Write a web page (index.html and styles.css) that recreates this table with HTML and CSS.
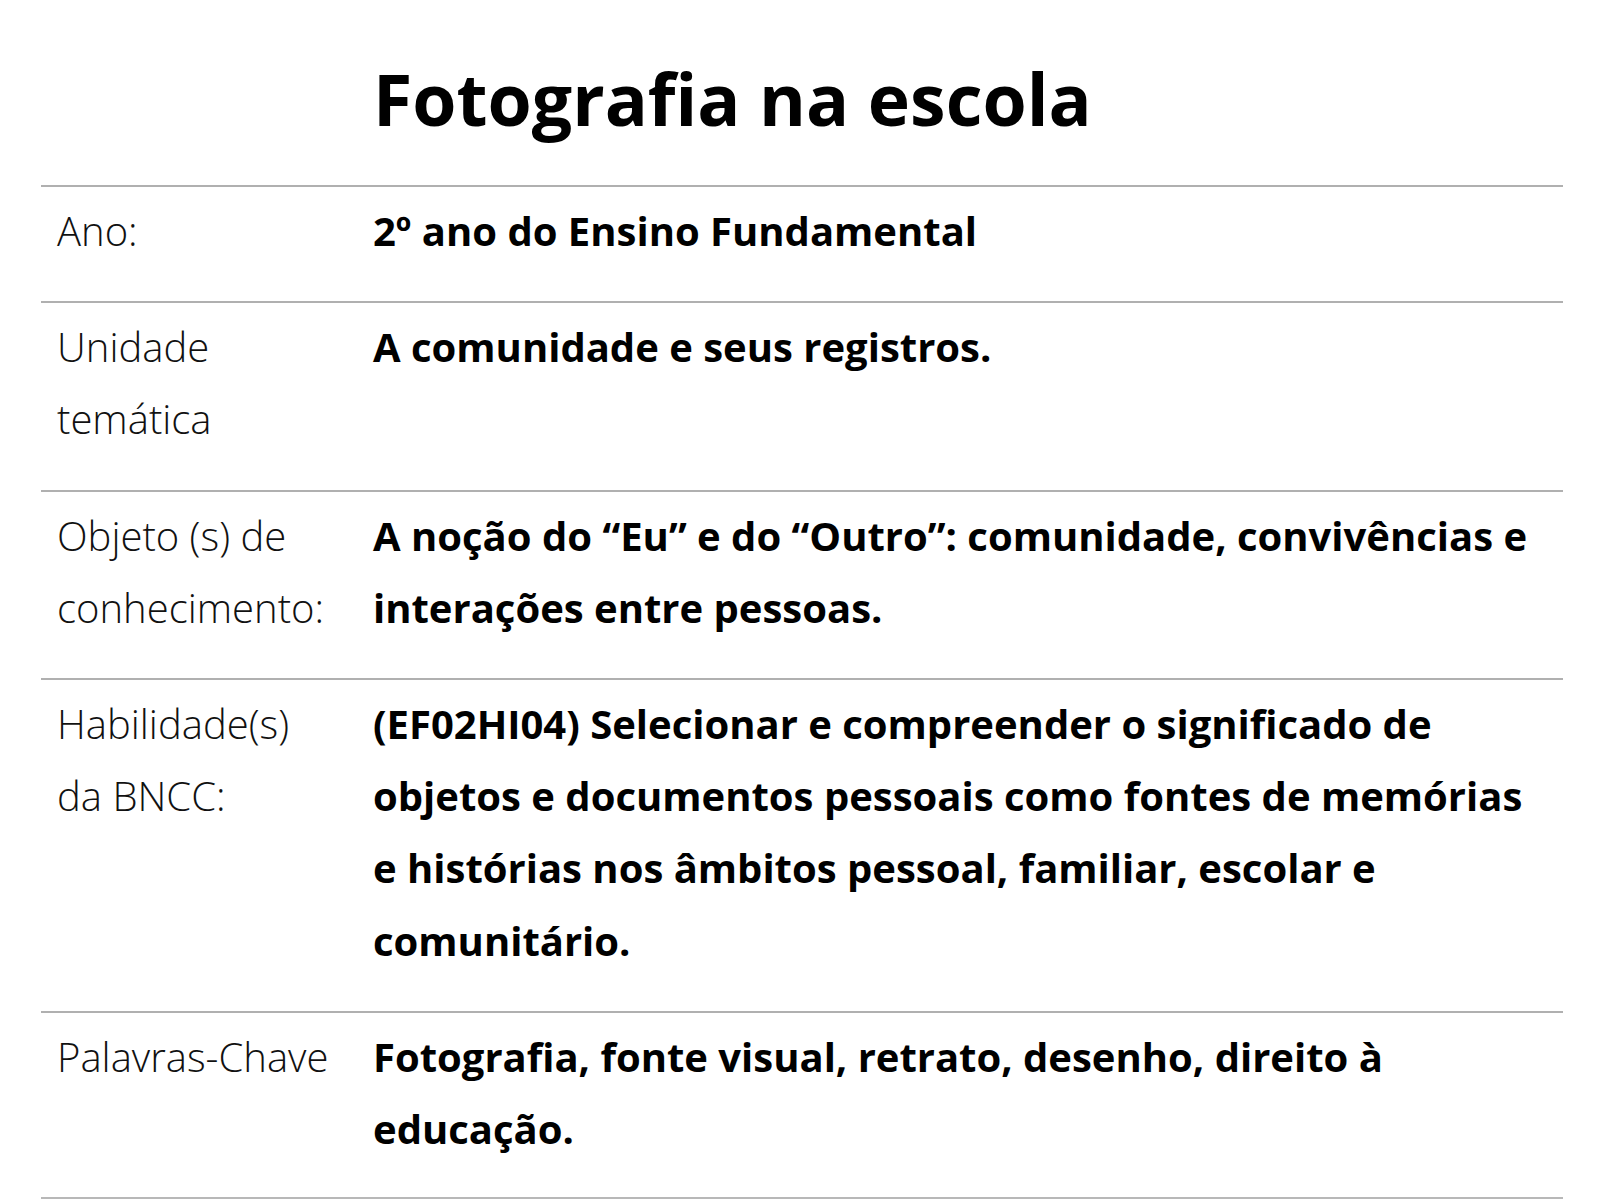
FILE: index.html
```html
<!DOCTYPE html>
<html lang="pt">
<head>
<meta charset="utf-8">
<title>Fotografia na escola</title>
<link rel="stylesheet" href="styles.css">
</head>
<body>
<div class="page">
  <div class="frame-top"></div>
  <h1 class="title">Fotografia na escola</h1>
  <div class="table">
    <div class="row">
      <div class="label">Ano:</div>
      <div class="value">2º ano do Ensino Fundamental</div>
    </div>
    <div class="row">
      <div class="label">Unidade temática</div>
      <div class="value">A comunidade e seus registros.</div>
    </div>
    <div class="row">
      <div class="label">Objeto (s) de conhecimento:</div>
      <div class="value">A noção do “Eu” e do “Outro”: comunidade, convivências e interações entre pessoas.</div>
    </div>
    <div class="row">
      <div class="label">Habilidade(s) da BNCC:</div>
      <div class="value">(EF02HI04) Selecionar e compreender o significado de objetos e documentos pessoais como fontes de memórias e histórias nos âmbitos pessoal, familiar, escolar e comunitário.</div>
    </div>
    <div class="row">
      <div class="label">Palavras-Chave</div>
      <div class="value">Fotografia, fonte visual, retrato, desenho, direito à educação.</div>
    </div>
  </div>
</div>
</body>
</html>
```

FILE: styles.css
```css
html, body {
  margin: 0;
  padding: 0;
  background: #ffffff;
}

body {
  font-family: "Open Sans", "Liberation Sans", sans-serif;
  color: #000;
}

.page {
  position: relative;
  width: 1522px;
  margin-left: 41px;
}

.frame-top {
  position: absolute;
  left: -8px;
  top: -8px;
  width: 1535px;
  height: 8px;
  border: 1px solid #c6e6b0;
  border-top: none;
  border-radius: 0 0 10px 10px;
  box-sizing: border-box;
}

.title {
  margin: 0;
  padding: 50px 0 37px 332px;
  font-size: 71.5px;
  font-weight: 700;
  line-height: 98px;
  letter-spacing: 0;
}

.table {
  border-bottom: 2px solid #b8b8b8;
}

.row {
  display: grid;
  grid-template-columns: 275px 1fr;
  column-gap: 41px;
  padding: 8px 23px 34px 16px;
  border-top: 2px solid #b0b0b0;
  font-size: 40px;
  line-height: 72.2px;
}

.row:last-child {
  padding-bottom: 32px;
}

.label {
  font-weight: 300;
  color: #111;
}

.value {
  font-weight: 700;
}
```
